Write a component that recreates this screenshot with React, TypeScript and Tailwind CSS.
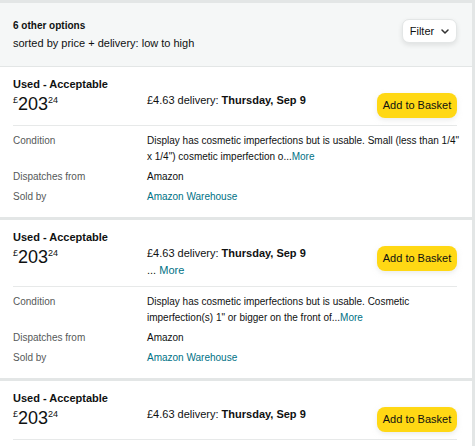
type Offer = {
  condition?: [string, string];
  moreDelivery?: boolean;
};

const offers: Offer[] = [
  {
    condition: [
      'Display has cosmetic imperfections but is usable. Small (less than 1/4"',
      'x 1/4") cosmetic imperfection o...',
    ],
  },
  {
    condition: [
      "Display has cosmetic imperfections but is usable. Cosmetic",
      'imperfection(s) 1" or bigger on the front of...',
    ],
    moreDelivery: true,
  },
  {},
];

function Price() {
  return (
    <div className="flex items-start h-[24px] text-[#0f1111] w-[134px] shrink-0">
      <span className="text-[9px] leading-none mt-[4px]">£</span>
      <span className="text-[18px] leading-[24px]">203</span>
      <span className="text-[9px] leading-none mt-[4px]">24</span>
    </div>
  );
}

function OfferCard({ offer }: { offer: Offer }) {
  return (
    <div className="bg-white pl-[13px] pr-[15px] last:grow">
      {/* Top: title, price, delivery, button */}
      <div className="pt-[9px] pb-[7px] border-b border-[#e7e9e9]">
        <div className="text-[11px] leading-[16px] font-bold text-[#0f1111]">
          Used - Acceptable
        </div>
        <div className="flex items-start">
          <Price />
          <div className="flex-1 text-[11px] leading-[17px] text-[#0f1111]">
            <div>
              £4.63 delivery: <span className="font-bold">Thursday, Sep 9</span>
            </div>
            {offer.moreDelivery && (
              <div>
                ... <span className="text-[#007185]">More</span>
              </div>
            )}
          </div>
          <button className="mt-[1px] w-[80px] h-[25px] shrink-0 rounded-[8px] bg-[#ffd814] text-[11px] text-[#0f1111] shadow-[0_2px_5px_rgba(213,217,217,0.5)]">
            Add to Basket
          </button>
        </div>
      </div>

      {/* Details */}
      {offer.condition && (
        <div className="pt-[7px] pb-[12px] flex flex-col gap-[4px] text-[10px] leading-[16px]">
          <div className="flex">
            <div className="w-[134px] shrink-0 text-[#565959]">Condition</div>
            <div className="flex-1 text-[#0f1111] whitespace-nowrap">
              <div>{offer.condition[0]}</div>
              <div>
                {offer.condition[1]}
                <span className="text-[#007185]">More</span>
              </div>
            </div>
          </div>
          <div className="flex">
            <div className="w-[134px] shrink-0 text-[#565959]">Dispatches from</div>
            <div className="text-[#0f1111]">Amazon</div>
          </div>
          <div className="flex">
            <div className="w-[134px] shrink-0 text-[#565959]">Sold by</div>
            <div className="text-[#007185]">Amazon Warehouse</div>
          </div>
        </div>
      )}
    </div>
  );
}

export default function App() {
  return (
    <div className="w-[475px] h-[446px] overflow-hidden bg-[#e3e6e6] pt-[3px] pr-[3px] flex flex-col font-['Liberation_Sans',Arial,sans-serif]">
      {/* Header */}
      <div className="bg-[#f5f7f7] border-b border-[#e3e6e6] pl-[13px] pr-[15px] pt-[15px] pb-[14px] flex items-start justify-between">
        <div>
          <div className="text-[10px] leading-[16px] font-bold text-[#0f1111]">
            6 other options
          </div>
          <div className="mt-[1px] text-[11px] leading-[17px] text-[#0f1111]">
            sorted by price + delivery: low to high
          </div>
        </div>
        <button className="mt-[1px] w-[55px] h-[24px] rounded-[7px] bg-white border border-[#e3e6e6] shadow-[0_2px_5px_rgba(15,17,17,0.1)] flex items-center justify-center gap-[7px] text-[11px] text-[#0f1111]">
          Filter
          <svg width="8" height="5" viewBox="0 0 8 5" fill="none">
            <path d="M1 1l3 3 3-3" stroke="#333" strokeWidth="1.5" strokeLinecap="round" strokeLinejoin="round" />
          </svg>
        </button>
      </div>

      <div className="flex flex-col gap-[3px] grow">
        {offers.map((o, i) => (
          <OfferCard key={i} offer={o} />
        ))}
      </div>
    </div>
  );
}
